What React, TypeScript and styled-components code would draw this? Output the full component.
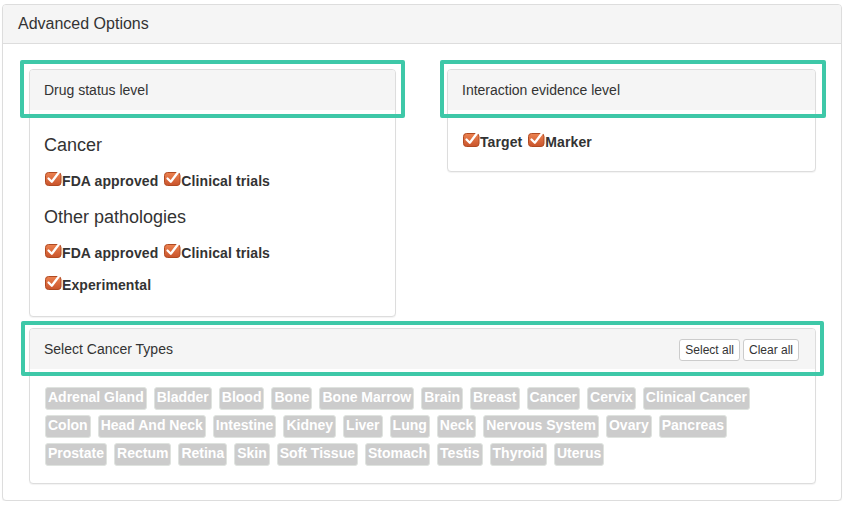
import React from "react";
import styled, { createGlobalStyle } from "styled-components";

const Global = createGlobalStyle`
  html, body { margin: 0; padding: 0; background: #fff; }
  body { font-family: "Liberation Sans", Arial, Helvetica, sans-serif; color: #333; font-size: 14px; }
  * { box-sizing: border-box; }
`;

const Page = styled.div`
  padding: 4px 2px 0 2px;
  width: 844px;
`;

const OuterPanel = styled.section`
  border: 1px solid #ddd;
  border-radius: 4px;
  background: #fff;
  box-shadow: 0 1px 1px rgba(0,0,0,0.05);
`;

const OuterHeading = styled.header`
  background: #f5f5f5;
  border-bottom: 1px solid #ddd;
  border-radius: 3px 3px 0 0;
  padding: 10px 15px;
`;

const OuterTitle = styled.h3`
  margin: 0;
  font-size: 16px;
  line-height: 1.1;
  font-weight: normal;
  color: #333;
`;

const OuterBody = styled.div`
  padding: 25px 25px 16px 26px;
  display: flex;
  flex-direction: column;
  gap: 11px;
`;

const TopRow = styled.div`
  display: grid;
  grid-template-columns: 367px 369px;
  column-gap: 51px;
  align-items: start;
`;

const Panel = styled.div`
  border: 1px solid #ddd;
  border-radius: 4px;
  background: #fff;
  box-shadow: 0 1px 1px rgba(0,0,0,0.05);
`;

const PanelHeading = styled.div`
  position: relative;
  background: #f5f5f5;
  border-radius: 3px 3px 0 0;
  padding: 10px 15px 10px 14px;
  height: 40px;
  display: flex;
  justify-content: space-between;
  align-items: flex-start;
  font-size: 14px;
  line-height: 20px;
`;

const Highlight = styled.div<{ $l: number; $r: number; $t: number; $b: number }>`
  position: absolute;
  left: ${(p) => p.$l}px;
  right: ${(p) => p.$r}px;
  top: ${(p) => p.$t}px;
  bottom: ${(p) => p.$b}px;
  border: 4px solid #3ec8a8;
  border-radius: 2px;
  pointer-events: none;
`;

const PanelBody = styled.div<{ $pt: number; $pb: number }>`
  padding: ${(p) => p.$pt}px 15px ${(p) => p.$pb}px;
`;

const Group = styled.div`
  & + & { margin-top: 16px; }
`;

const GroupTitle = styled.h4`
  margin: 0 0 16px -1px;
  font-size: 18px;
  line-height: 20px;
  font-weight: normal;
  color: #333;
`;

const CheckRows = styled.div`
  display: flex;
  flex-direction: column;
  gap: 12px;
`;

const CheckRow = styled.div`
  display: flex;
  align-items: flex-start;
  height: 20px;
`;

const CheckLabel = styled.label`
  display: inline-flex;
  align-items: baseline;
  font-weight: bold;
  font-size: 14px;
  line-height: 20px;
  letter-spacing: 0.1px;
  color: #333;
  margin-right: 6px;
`;

const Box = styled.svg`
  width: 17px;
  height: 16px;
  flex: none;
  align-self: flex-start;
  margin-top: -1px;
`;

const CheckIcon = () => (
  <Box viewBox="0 0 17 16">
    <defs>
      <linearGradient id="cbg" x1="0" y1="0" x2="0" y2="1">
        <stop offset="0" stopColor="#ec8250" />
        <stop offset="1" stopColor="#c9542c" />
      </linearGradient>
    </defs>
    <rect x="0.5" y="2.5" width="15.5" height="13" rx="3" fill="url(#cbg)" stroke="#b04a22" strokeWidth="1" />
    <polyline points="3.5,8.5 6.8,11.8 14,2.2" fill="none" stroke="#fff" strokeWidth="2.3" strokeLinecap="round" strokeLinejoin="round" />
  </Box>
);

const Check = ({ children }: { children: React.ReactNode }) => (
  <CheckLabel>
    <CheckIcon />
    <span>{children}</span>
  </CheckLabel>
);

const ButtonGroup = styled.div`
  display: flex;
  gap: 3px;
  margin-right: 1px;
`;

const SmallButton = styled.button`
  font-family: "Liberation Sans", Arial, sans-serif;
  font-size: 12px;
  line-height: 18px;
  padding: 1px 5px;
  border: 1px solid #ccc;
  border-radius: 3px;
  background: #fff;
  color: #333;
  cursor: pointer;
`;

const TagList = styled.div`
  display: flex;
  flex-wrap: wrap;
  column-gap: 7px;
  row-gap: 5px;
  max-width: 730px;
`;

const Tag = styled.span`
  display: inline-block;
  background: #cccccc;
  border: 1px solid #dfe3df;
  border-radius: 3px;
  color: #fff;
  font-weight: bold;
  font-size: 14px;
  line-height: 19px;
  padding: 0 2px 2px;
  white-space: nowrap;
`;

const cancerTypes = [
  "Adrenal Gland", "Bladder", "Blood", "Bone", "Bone Marrow", "Brain", "Breast", "Cancer", "Cervix", "Clinical Cancer",
  "Colon", "Head And Neck", "Intestine", "Kidney", "Liver", "Lung", "Neck", "Nervous System", "Ovary", "Pancreas",
  "Prostate", "Rectum", "Retina", "Skin", "Soft Tissue", "Stomach", "Testis", "Thyroid", "Uterus",
];

export default function App() {
  return (
    <>
      <Global />
      <Page>
        <OuterPanel>
          <OuterHeading>
            <OuterTitle>Advanced Options</OuterTitle>
          </OuterHeading>
          <OuterBody>
            <TopRow>
              <Panel>
                <PanelHeading>
                  Drug status level
                  <Highlight $l={-10} $r={-10} $t={-10} $b={-8} />
                </PanelHeading>
                <PanelBody $pt={25} $pb={21}>
                  <Group>
                    <GroupTitle>Cancer</GroupTitle>
                    <CheckRows>
                      <CheckRow>
                        <Check>FDA approved</Check>
                        <Check>Clinical trials</Check>
                      </CheckRow>
                    </CheckRows>
                  </Group>
                  <Group>
                    <GroupTitle>Other pathologies</GroupTitle>
                    <CheckRows>
                      <CheckRow>
                        <Check>FDA approved</Check>
                        <Check>Clinical trials</Check>
                      </CheckRow>
                      <CheckRow>
                        <Check>Experimental</Check>
                      </CheckRow>
                    </CheckRows>
                  </Group>
                </PanelBody>
              </Panel>
              <Panel>
                <PanelHeading>
                  Interaction evidence level
                  <Highlight $l={-8} $r={-11} $t={-10} $b={-8} />
                </PanelHeading>
                <PanelBody $pt={22} $pb={19}>
                  <CheckRow>
                    <Check>Target</Check>
                    <Check>Marker</Check>
                  </CheckRow>
                </PanelBody>
              </Panel>
            </TopRow>
            <Panel>
              <PanelHeading>
                <span>Select Cancer Types</span>
                <ButtonGroup>
                  <SmallButton>Select all</SmallButton>
                  <SmallButton>Clear all</SmallButton>
                </ButtonGroup>
                <Highlight $l={-9} $r={-9} $t={-8} $b={-7} />
              </PanelHeading>
              <PanelBody $pt={18} $pb={17}>
                <TagList>
                  {cancerTypes.map((t) => (
                    <Tag key={t}>{t}</Tag>
                  ))}
                </TagList>
              </PanelBody>
            </Panel>
          </OuterBody>
        </OuterPanel>
      </Page>
    </>
  );
}
